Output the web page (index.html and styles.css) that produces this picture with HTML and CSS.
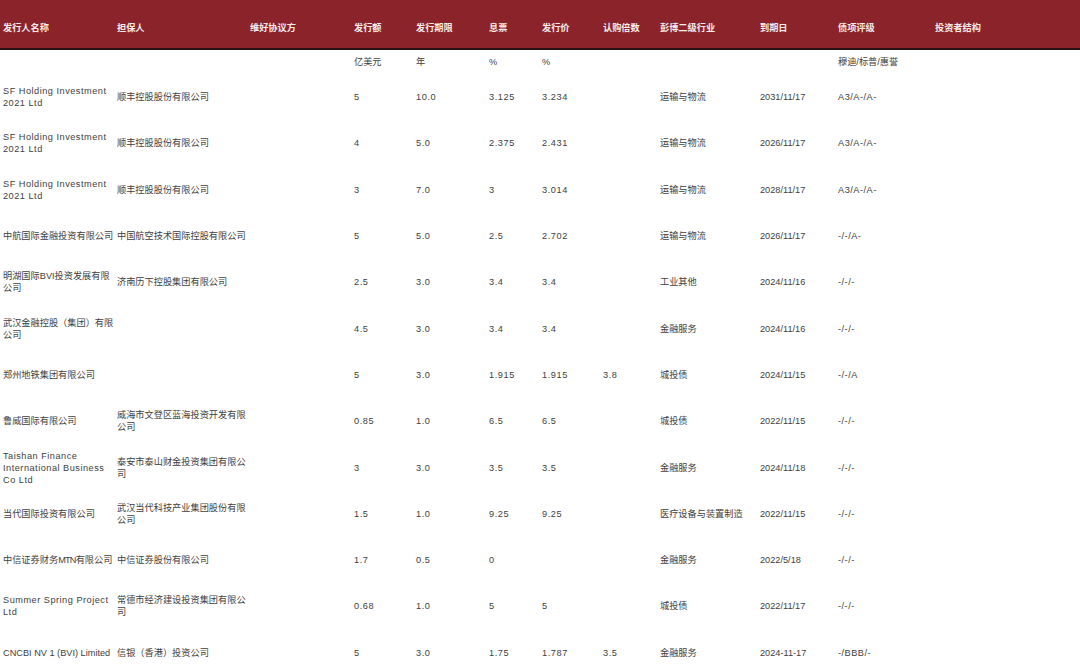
FILE: index.html
```html
<!DOCTYPE html>
<html lang="zh-CN">
<head>
<meta charset="utf-8">
<title>债券发行</title>
<link rel="stylesheet" href="styles.css">
</head>
<body>
<div class="table">
  <div class="row head">
    <div class="c">发行人名称</div><div class="c">担保人</div><div class="c">维好协议方</div><div class="c">发行额</div><div class="c">发行期限</div><div class="c">息票</div><div class="c">发行价</div><div class="c">认购倍数</div><div class="c">彭博二级行业</div><div class="c">到期日</div><div class="c">债项评级</div><div class="c">投资者结构</div>
  </div>
  <div class="row units">
    <div class="c"></div><div class="c"></div><div class="c"></div><div class="c">亿美元</div><div class="c">年</div><div class="c">%</div><div class="c">%</div><div class="c"></div><div class="c"></div><div class="c"></div><div class="c">穆迪/标普/惠誉</div><div class="c"></div>
  </div>
  <div class="row">
    <div class="c en">SF Holding Investment 2021 Ltd</div><div class="c">顺丰控股股份有限公司</div><div class="c"></div><div class="c num">5</div><div class="c num">10.0</div><div class="c num">3.125</div><div class="c num">3.234</div><div class="c num"></div><div class="c">运输与物流</div><div class="c">2031/11/17</div><div class="c rt">A3/A-/A-</div><div class="c"></div>
  </div>
  <div class="row">
    <div class="c en">SF Holding Investment 2021 Ltd</div><div class="c">顺丰控股股份有限公司</div><div class="c"></div><div class="c num">4</div><div class="c num">5.0</div><div class="c num">2.375</div><div class="c num">2.431</div><div class="c num"></div><div class="c">运输与物流</div><div class="c">2026/11/17</div><div class="c rt">A3/A-/A-</div><div class="c"></div>
  </div>
  <div class="row">
    <div class="c en">SF Holding Investment 2021 Ltd</div><div class="c">顺丰控股股份有限公司</div><div class="c"></div><div class="c num">3</div><div class="c num">7.0</div><div class="c num">3</div><div class="c num">3.014</div><div class="c num"></div><div class="c">运输与物流</div><div class="c">2028/11/17</div><div class="c rt">A3/A-/A-</div><div class="c"></div>
  </div>
  <div class="row">
    <div class="c">中航国际金融投资有限公司</div><div class="c">中国航空技术国际控股有限公司</div><div class="c"></div><div class="c num">5</div><div class="c num">5.0</div><div class="c num">2.5</div><div class="c num">2.702</div><div class="c num"></div><div class="c">运输与物流</div><div class="c">2026/11/17</div><div class="c rt">-/-/A-</div><div class="c"></div>
  </div>
  <div class="row">
    <div class="c">明湖国际BVI投资发展有限公司</div><div class="c">济南历下控股集团有限公司</div><div class="c"></div><div class="c num">2.5</div><div class="c num">3.0</div><div class="c num">3.4</div><div class="c num">3.4</div><div class="c num"></div><div class="c">工业其他</div><div class="c">2024/11/16</div><div class="c rt">-/-/-</div><div class="c"></div>
  </div>
  <div class="row">
    <div class="c">武汉金融控股（集团）有限公司</div><div class="c"></div><div class="c"></div><div class="c num">4.5</div><div class="c num">3.0</div><div class="c num">3.4</div><div class="c num">3.4</div><div class="c num"></div><div class="c">金融服务</div><div class="c">2024/11/16</div><div class="c rt">-/-/-</div><div class="c"></div>
  </div>
  <div class="row">
    <div class="c">郑州地铁集团有限公司</div><div class="c"></div><div class="c"></div><div class="c num">5</div><div class="c num">3.0</div><div class="c num">1.915</div><div class="c num">1.915</div><div class="c num">3.8</div><div class="c">城投债</div><div class="c">2024/11/15</div><div class="c rt">-/-/A</div><div class="c"></div>
  </div>
  <div class="row">
    <div class="c">鲁威国际有限公司</div><div class="c">威海市文登区蓝海投资开发有限公司</div><div class="c"></div><div class="c num">0.85</div><div class="c num">1.0</div><div class="c num">6.5</div><div class="c num">6.5</div><div class="c num"></div><div class="c">城投债</div><div class="c">2022/11/15</div><div class="c rt">-/-/-</div><div class="c"></div>
  </div>
  <div class="row">
    <div class="c en">Taishan Finance International Business Co Ltd</div><div class="c">泰安市泰山财金投资集团有限公司</div><div class="c"></div><div class="c num">3</div><div class="c num">3.0</div><div class="c num">3.5</div><div class="c num">3.5</div><div class="c num"></div><div class="c">金融服务</div><div class="c">2024/11/18</div><div class="c rt">-/-/-</div><div class="c"></div>
  </div>
  <div class="row">
    <div class="c">当代国际投资有限公司</div><div class="c">武汉当代科技产业集团股份有限公司</div><div class="c"></div><div class="c num">1.5</div><div class="c num">1.0</div><div class="c num">9.25</div><div class="c num">9.25</div><div class="c num"></div><div class="c">医疗设备与装置制造</div><div class="c">2022/11/15</div><div class="c rt">-/-/-</div><div class="c"></div>
  </div>
  <div class="row">
    <div class="c nowrap">中信证券财务<span class="narrow">MTN</span>有限公司</div><div class="c">中信证券股份有限公司</div><div class="c"></div><div class="c num">1.7</div><div class="c num">0.5</div><div class="c num">0</div><div class="c num"></div><div class="c num"></div><div class="c">金融服务</div><div class="c">2022/5/18</div><div class="c rt">-/-/-</div><div class="c"></div>
  </div>
  <div class="row">
    <div class="c en">Summer Spring Project Ltd</div><div class="c">常德市经济建设投资集团有限公司</div><div class="c"></div><div class="c num">0.68</div><div class="c num">1.0</div><div class="c num">5</div><div class="c num">5</div><div class="c num"></div><div class="c">城投债</div><div class="c">2022/11/17</div><div class="c rt">-/-/-</div><div class="c"></div>
  </div>
  <div class="row">
    <div class="c nowrap">CNCBI NV 1 (BVI) Limited</div><div class="c">信银（香港）投资公司</div><div class="c"></div><div class="c num">5</div><div class="c num">3.0</div><div class="c num">1.75</div><div class="c num">1.787</div><div class="c num">3.5</div><div class="c">金融服务</div><div class="c">2024-11-17</div><div class="c rt">-/BBB/-</div><div class="c"></div>
  </div>
</div>
</body>
</html>
```

FILE: styles.css
```css
html, body {
  margin: 0;
  padding: 0;
  background: #ffffff;
}
body {
  width: 1080px;
  height: 668px;
  overflow: hidden;
  font-family: "Liberation Sans", "Noto Sans CJK SC", sans-serif;
  font-size: 9.2px;
  line-height: 12px;
  color: #3e3e3e;
}
.table {
  display: flex;
  flex-direction: column;
}
.row {
  display: grid;
  grid-template-columns: 114px 133px 104px 62px 73px 53px 61px 57px 100px 78px 97px 148px;
  height: 46.3px;
  align-items: center;
}
.c {
  padding-left: 3px;
  overflow-wrap: break-word;
}
.en {
  letter-spacing: 0.5px;
}
.num {
  letter-spacing: 0.6px;
}
.nowrap {
  white-space: nowrap;
}
.narrow {
  letter-spacing: -0.8px;
}
.rt {
  letter-spacing: 0.5px;
}
.head {
  height: 48px;
  background: #8a242a;
  border-bottom: 2px solid #2a1212;
  color: #f6eaea;
  font-weight: bold;
  align-items: start;
}
.head .c {
  padding-top: 22px;
}
.units {
  height: 24px;
}
```
